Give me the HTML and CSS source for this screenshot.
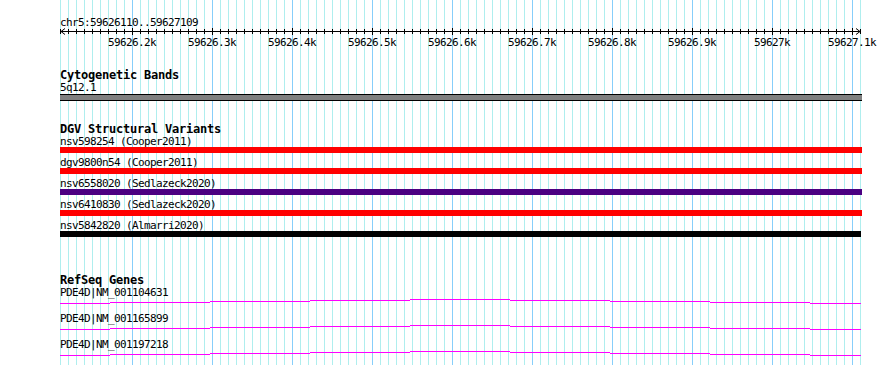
FILE: index.html
```html
<!DOCTYPE html>
<html lang="en">
<head>
  <meta charset="UTF-8">
  <title>chr5:59626110..59627109</title>
  <link rel="stylesheet" href="styles.css">
</head>
<body>
  <div class="panel">

    <!-- Ruler -->
    <div class="ruler">
      <div class="ruler-label">chr5:59626110..59627109</div>
      <svg class="ruler-scale" width="802" height="20">
        <path class="axis" d="M0 3.5H801"/>
        <path class="ticks-minor" d="M0 3.5H801"/>
        <path class="ticks-major" d="M0 3.5H801"/>
        <path class="arrow" d="M5 0.5L1 3.5L5 6.5"/>
        <path class="arrow" d="M796 0.5L800 3.5L796 6.5"/>
        <text class="tick-label" x="72" y="18">59626.2k</text>
        <text class="tick-label" x="152" y="18">59626.3k</text>
        <text class="tick-label" x="232" y="18">59626.4k</text>
        <text class="tick-label" x="312" y="18">59626.5k</text>
        <text class="tick-label" x="392" y="18">59626.6k</text>
        <text class="tick-label" x="472" y="18">59626.7k</text>
        <text class="tick-label" x="552" y="18">59626.8k</text>
        <text class="tick-label" x="632" y="18">59626.9k</text>
        <text class="tick-label" x="712" y="18">59627k</text>
        <text class="tick-label" x="792" y="18">59627.1k</text>
      </svg>
    </div>

    <!-- Cytogenetic Bands -->
    <div class="track cyto">
      <div class="track-title">Cytogenetic Bands</div>
      <div class="feature-label">5q12.1</div>
      <div class="band"></div>
    </div>

    <!-- DGV Structural Variants -->
    <div class="track dgv">
      <div class="track-title">DGV Structural Variants</div>
      <div class="variant">
        <div class="feature-label">nsv598254 (Cooper2011)</div>
        <div class="bar bar-red"></div>
      </div>
      <div class="variant">
        <div class="feature-label">dgv9800n54 (Cooper2011)</div>
        <div class="bar bar-red"></div>
      </div>
      <div class="variant">
        <div class="feature-label">nsv6558020 (Sedlazeck2020)</div>
        <div class="bar bar-purple"></div>
      </div>
      <div class="variant">
        <div class="feature-label">nsv6410830 (Sedlazeck2020)</div>
        <div class="bar bar-red"></div>
      </div>
      <div class="variant">
        <div class="feature-label">nsv5842820 (Almarri2020)</div>
        <div class="bar bar-black"></div>
      </div>
    </div>

    <!-- RefSeq Genes -->
    <div class="track refseq">
      <div class="track-title">RefSeq Genes</div>
      <div class="gene">
        <div class="feature-label">PDE4D|NM_001104631</div>
        <svg class="gene-line" width="802" height="15">
          <path d="M0 5.5H50M50 4.5H150M150 3.5H250M250 2.5H350M350 1.5H450M450 2.5H550M550 3.5H650M650 4.5H750M750 5.5H801"/>
        </svg>
      </div>
      <div class="gene">
        <div class="feature-label">PDE4D|NM_001165899</div>
        <svg class="gene-line" width="802" height="15">
          <path d="M0 5.5H50M50 4.5H150M150 3.5H250M250 2.5H350M350 1.5H450M450 2.5H550M550 3.5H650M650 4.5H750M750 5.5H801"/>
        </svg>
      </div>
      <div class="gene">
        <div class="feature-label">PDE4D|NM_001197218</div>
        <svg class="gene-line" width="802" height="15">
          <path d="M0 5.5H50M50 4.5H150M150 3.5H250M250 2.5H350M350 1.5H450M450 2.5H550M550 3.5H650M650 4.5H750M750 5.5H801"/>
        </svg>
      </div>
    </div>

  </div>
</body>
</html>
```

FILE: styles.css
```css
/* General */
body {
  margin: 0;
  background: #ffffff;
  color: #000000;
  font-family: "DejaVu Sans Mono", "Liberation Mono", monospace;
  overflow: hidden;
}

/* Track panel with the 10bp / 100bp grid behind it */
.panel {
  margin-left: 60px;
  width: 802px;
  height: 365px;
  background-image:
    repeating-linear-gradient(90deg, transparent 0 72px, #87cefa 72px 73px, transparent 73px 80px),
    repeating-linear-gradient(90deg, #afeeee 0 1px, transparent 1px 8px);
  background-size: 801px 100%;
  background-repeat: no-repeat;
}

.feature-label,
.ruler-label {
  font-size: 11px;
  letter-spacing: -0.62px;
  line-height: 11px;
  white-space: nowrap;
}

.track-title {
  font-size: 12px;
  font-weight: bold;
  letter-spacing: -0.22px;
  line-height: 14px;
  white-space: nowrap;
}

/* Ruler */
.ruler {
  padding-top: 17px;
}

.ruler-scale {
  display: block;
  overflow: visible;
}

.ruler-scale path {
  fill: none;
  stroke: #000000;
}

.ruler-scale .axis {
  stroke-width: 1;
}

.ruler-scale .ticks-minor {
  stroke-width: 5;
  stroke-dasharray: 1 7;
}

.ruler-scale .ticks-major {
  stroke-width: 7;
  stroke-dasharray: 1 79;
  stroke-dashoffset: -72;
}

.tick-label {
  font-family: "DejaVu Sans Mono", "Liberation Mono", monospace;
  font-size: 11px;
  letter-spacing: -0.62px;
  text-anchor: middle;
  fill: #000000;
}

/* Cytogenetic Bands */
.cyto {
  margin-top: 20px;
}

.band {
  margin-top: 1px;
  height: 5px;
  background: #808080;
  border: 1px solid #000000;
  border-left: none;
  border-right: none;
}

/* DGV Structural Variants */
.dgv {
  margin-top: 21px;
  padding-bottom: 1px;
}

.variant {
  margin-bottom: 4px;
}

.bar {
  height: 6px;
  width: 802px;
}

.bar-red {
  background: #ff0000;
}

.bar-purple {
  background: #4b0082;
}

.bar-black {
  background: #000000;
  width: 801px;
}

/* RefSeq Genes */
.refseq {
  margin-top: 32px;
}

.refseq .track-title {
  line-height: 13px;
}

.gene-line {
  display: block;
}

.gene-line path {
  fill: none;
  stroke: #ff00ff;
  stroke-width: 1;
}
```
